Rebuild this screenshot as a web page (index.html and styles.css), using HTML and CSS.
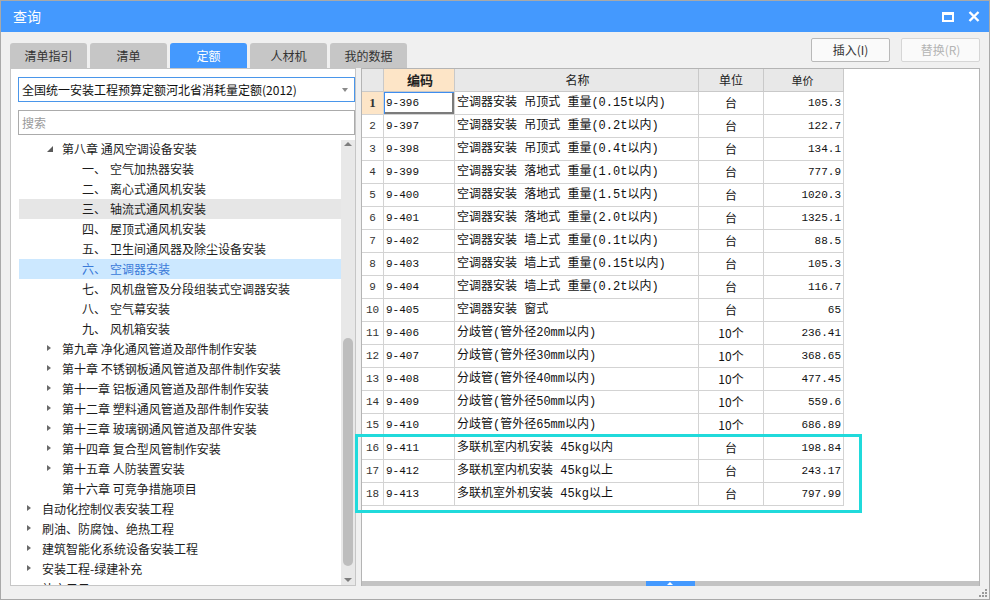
FILE: index.html
```html
<!DOCTYPE html>
<html lang="zh">
<head>
<meta charset="utf-8">
<title>查询</title>
<link rel="stylesheet" href="styles.css">
</head>
<body>
<div class="window">
  <div class="titlebar">
    <span class="title">查询</span>
    <div class="win-ctrls">
      <svg class="ico-max" width="12" height="10" viewBox="0 0 12 10"><rect x="1" y="1" width="10" height="8" fill="none" stroke="#fff" stroke-width="2"/><rect x="1" y="0" width="10" height="3" fill="#fff"/></svg>
      <svg class="ico-close" width="12" height="11" viewBox="0 0 12 11"><path d="M1.5 1 L10.5 10 M10.5 1 L1.5 10" stroke="#fff" stroke-width="2.4" stroke-linecap="butt"/></svg>
    </div>
  </div>

  <div class="toolbar">
    <div class="tabs">
      <div class="tab">清单指引</div>
      <div class="tab">清单</div>
      <div class="tab active">定额</div>
      <div class="tab">人材机</div>
      <div class="tab">我的数据</div>
    </div>
    <div class="actions">
      <button class="btn">插入(I)</button>
      <button class="btn disabled">替换(R)</button>
    </div>
  </div>

  <div class="main">
    <div class="left-panel">
      <div class="forms">
        <div class="select">全国统一安装工程预算定额河北省消耗量定额(2012)<span class="caret"></span></div>
        <div class="search">搜索</div>
      </div>
      <div class="tree-wrap">
        <div class="tree">
          <div class="node l2"><span class="tw exp"></span>第八章 通风空调设备安装</div>
          <div class="node l3"><span class="num">一、</span>空气加热器安装</div>
          <div class="node l3"><span class="num">二、</span>离心式通风机安装</div>
          <div class="node l3 hover"><span class="num">三、</span>轴流式通风机安装</div>
          <div class="node l3"><span class="num">四、</span>屋顶式通风机安装</div>
          <div class="node l3"><span class="num">五、</span>卫生间通风器及除尘设备安装</div>
          <div class="node l3 selected"><span class="num">六、</span>空调器安装</div>
          <div class="node l3"><span class="num">七、</span>风机盘管及分段组装式空调器安装</div>
          <div class="node l3"><span class="num">八、</span>空气幕安装</div>
          <div class="node l3"><span class="num">九、</span>风机箱安装</div>
          <div class="node l2"><span class="tw col"></span>第九章 净化通风管道及部件制作安装</div>
          <div class="node l2"><span class="tw col"></span>第十章 不锈钢板通风管道及部件制作安装</div>
          <div class="node l2"><span class="tw col"></span>第十一章 铝板通风管道及部件制作安装</div>
          <div class="node l2"><span class="tw col"></span>第十二章 塑料通风管道及部件制作安装</div>
          <div class="node l2"><span class="tw col"></span>第十三章 玻璃钢通风管道及部件安装</div>
          <div class="node l2"><span class="tw col"></span>第十四章 复合型风管制作安装</div>
          <div class="node l2"><span class="tw col"></span>第十五章 人防装置安装</div>
          <div class="node l2"><span class="tw"></span>第十六章 可竞争措施项目</div>
          <div class="node l1"><span class="tw col"></span>自动化控制仪表安装工程</div>
          <div class="node l1"><span class="tw col"></span>刷油、防腐蚀、绝热工程</div>
          <div class="node l1"><span class="tw col"></span>建筑智能化系统设备安装工程</div>
          <div class="node l1"><span class="tw col"></span>安装工程-绿建补充</div>
          <div class="node l1"><span class="tw"></span>补充子目</div>
        </div>
        <div class="vscroll">
          <span class="arr up"></span>
          <div class="vtrack"><div class="vthumb"></div></div>
          <span class="arr down"></span>
        </div>
      </div>
    </div>

    <div class="right-panel">
      <div class="grid-area">
        <div class="grid">
          <div class="row head">
            <div class="c rn"></div>
            <div class="c code hl">编码</div>
            <div class="c name">名称</div>
            <div class="c unit">单位</div>
            <div class="c price">单价</div>
          </div>
          <div class="row">
            <div class="c rn hl">1</div>
            <div class="c code focus">9-396</div>
            <div class="c name">空调器安装 吊顶式 重量(0.15t以内)</div>
            <div class="c unit">台</div>
            <div class="c price">105.3</div>
          </div>
          <div class="row"><div class="c rn">2</div><div class="c code">9-397</div><div class="c name">空调器安装 吊顶式 重量(0.2t以内)</div><div class="c unit">台</div><div class="c price">122.7</div></div>
          <div class="row"><div class="c rn">3</div><div class="c code">9-398</div><div class="c name">空调器安装 吊顶式 重量(0.4t以内)</div><div class="c unit">台</div><div class="c price">134.1</div></div>
          <div class="row"><div class="c rn">4</div><div class="c code">9-399</div><div class="c name">空调器安装 落地式 重量(1.0t以内)</div><div class="c unit">台</div><div class="c price">777.9</div></div>
          <div class="row"><div class="c rn">5</div><div class="c code">9-400</div><div class="c name">空调器安装 落地式 重量(1.5t以内)</div><div class="c unit">台</div><div class="c price">1020.3</div></div>
          <div class="row"><div class="c rn">6</div><div class="c code">9-401</div><div class="c name">空调器安装 落地式 重量(2.0t以内)</div><div class="c unit">台</div><div class="c price">1325.1</div></div>
          <div class="row"><div class="c rn">7</div><div class="c code">9-402</div><div class="c name">空调器安装 墙上式 重量(0.1t以内)</div><div class="c unit">台</div><div class="c price">88.5</div></div>
          <div class="row"><div class="c rn">8</div><div class="c code">9-403</div><div class="c name">空调器安装 墙上式 重量(0.15t以内)</div><div class="c unit">台</div><div class="c price">105.3</div></div>
          <div class="row"><div class="c rn">9</div><div class="c code">9-404</div><div class="c name">空调器安装 墙上式 重量(0.2t以内)</div><div class="c unit">台</div><div class="c price">116.7</div></div>
          <div class="row"><div class="c rn">10</div><div class="c code">9-405</div><div class="c name">空调器安装 窗式</div><div class="c unit">台</div><div class="c price">65</div></div>
          <div class="row"><div class="c rn">11</div><div class="c code">9-406</div><div class="c name">分歧管(管外径20mm以内)</div><div class="c unit">10个</div><div class="c price">236.41</div></div>
          <div class="row"><div class="c rn">12</div><div class="c code">9-407</div><div class="c name">分歧管(管外径30mm以内)</div><div class="c unit">10个</div><div class="c price">368.65</div></div>
          <div class="row"><div class="c rn">13</div><div class="c code">9-408</div><div class="c name">分歧管(管外径40mm以内)</div><div class="c unit">10个</div><div class="c price">477.45</div></div>
          <div class="row"><div class="c rn">14</div><div class="c code">9-409</div><div class="c name">分歧管(管外径50mm以内)</div><div class="c unit">10个</div><div class="c price">559.6</div></div>
          <div class="row"><div class="c rn">15</div><div class="c code">9-410</div><div class="c name">分歧管(管外径65mm以内)</div><div class="c unit">10个</div><div class="c price">686.89</div></div>
          <div class="row"><div class="c rn">16</div><div class="c code">9-411</div><div class="c name">多联机室内机安装 45kg以内</div><div class="c unit">台</div><div class="c price">198.84</div></div>
          <div class="row"><div class="c rn">17</div><div class="c code">9-412</div><div class="c name">多联机室内机安装 45kg以上</div><div class="c unit">台</div><div class="c price">243.17</div></div>
          <div class="row"><div class="c rn">18</div><div class="c code">9-413</div><div class="c name">多联机室外机安装 45kg以上</div><div class="c unit">台</div><div class="c price">797.99</div></div>
        </div>
      </div>
      <div class="hbar"><div class="hthumb"><span class="hcaret"></span></div></div>
    </div>
  </div>

  <div class="statusbar">
    <svg class="grip" width="10" height="10" viewBox="0 0 10 10"><g fill="#9a9a9a"><rect x="7" y="1" width="2" height="2"/><rect x="4" y="4" width="2" height="2"/><rect x="7" y="4" width="2" height="2"/><rect x="1" y="7" width="2" height="2"/><rect x="4" y="7" width="2" height="2"/><rect x="7" y="7" width="2" height="2"/></g></svg>
  </div>

  <div class="annot"></div>
</div>
</body>
</html>
```

FILE: styles.css
```css
html, body {
  margin: 0;
  padding: 0;
}
body {
  font-family: "Noto Sans CJK SC", "Noto Sans", sans-serif;
  font-size: 12px;
  color: #222;
  background: #f0f0f0;
}
.window {
  position: relative;
  width: 990px;
  height: 600px;
  box-sizing: border-box;
  border: 1px solid #a9a9a9;
  background: #f0f0f0;
  display: flex;
  flex-direction: column;
  overflow: hidden;
}

/* title bar */
.titlebar {
  height: 31px;
  flex: none;
  background: #4499fe;
  display: flex;
  align-items: center;
  justify-content: space-between;
  padding: 0 9px 0 12px;
}
.title {
  color: #fff;
  font-size: 14px;
  line-height: 31px;
}
.win-ctrls {
  display: flex;
  align-items: center;
  gap: 14px;
}
.ico-max, .ico-close { display: block; }

/* toolbar */
.toolbar {
  height: 36px;
  flex: none;
  display: flex;
  justify-content: space-between;
  padding: 0 9px 0 9px;
}
.tabs {
  display: flex;
  gap: 3px;
  align-self: flex-end;
}
.tab {
  width: 77px;
  height: 25px;
  line-height: 25px;
  text-align: center;
  background: #c6c6c6;
  color: #333;
  border-radius: 3px 3px 0 0;
  font-size: 12px;
}
.tab.active {
  background: #4499fe;
  color: #fff;
}
.actions {
  display: flex;
  gap: 11px;
  padding-top: 6px;
}
.btn {
  width: 79px;
  height: 24px;
  box-sizing: border-box;
  border: 1px solid #b9b9b9;
  border-radius: 2px;
  background: #fafafa;
  color: #333;
  font-family: "Noto Sans CJK SC", sans-serif;
  font-size: 12px;
  line-height: 20px;
  padding: 0;
}
.btn.disabled {
  color: #b4b4b4;
  border-color: #d6d6d6;
}

/* main area */
.main {
  height: 518px;
  flex: none;
  display: flex;
  gap: 5px;
  padding: 0 9px;
}
.left-panel {
  width: 346px;
  box-sizing: border-box;
  border: 1px solid #c6c6c6;
  background: #fff;
  display: flex;
  flex-direction: column;
}
.forms {
  padding: 8px 0 0 7px;
  display: flex;
  flex-direction: column;
  gap: 8px;
}
.select {
  position: relative;
  height: 25px;
  box-sizing: border-box;
  border: 1px solid #4a96ea;
  padding-left: 3px;
  line-height: 23px;
  font-size: 12px;
  color: #111;
}
.caret {
  position: absolute;
  right: 6px;
  top: 10px;
  width: 0;
  height: 0;
  border-left: 3.5px solid transparent;
  border-right: 3.5px solid transparent;
  border-top: 4px solid #8a8a8a;
}
.search {
  height: 25px;
  box-sizing: border-box;
  border: 1px solid #ababab;
  padding-left: 3px;
  line-height: 23px;
  color: #9a9a9a;
}
.tree-wrap {
  margin-top: 4px;
  flex: 1;
  min-height: 0;
  display: flex;
}
.tree {
  flex: 1;
  margin-left: 8px;
  overflow: hidden;
}
.node {
  height: 20px;
  line-height: 20px;
  white-space: nowrap;
  display: flex;
  align-items: center;
  color: #1c1c1c;
}
.node.l1 { padding-left: 8px; }
.node.l2 { padding-left: 28px; }
.node.l3 { padding-left: 63px; }
.node.hover { background: #e6e6e6; }
.node.selected { background: #cce8ff; color: #3a7ad9; }
.tw {
  width: 15px;
  height: 20px;
  flex: none;
  position: relative;
}
.tw.col::before {
  content: "";
  position: absolute;
  left: 0;
  top: 6px;
  border-left: 4px solid #6a6a6a;
  border-top: 3.5px solid transparent;
  border-bottom: 3.5px solid transparent;
}
.tw.exp::before {
  content: "";
  position: absolute;
  left: 0;
  top: 7px;
  border-right: 6px solid #5a5a5a;
  border-top: 6px solid transparent;
}
.num {
  width: 28px;
  flex: none;
}
.vscroll {
  width: 14px;
  flex: none;
  background: #e8e8e8;
  margin-top: 1px;
  display: flex;
  flex-direction: column;
  align-items: center;
}
.arr {
  width: 0;
  height: 0;
  border-left: 4px solid transparent;
  border-right: 4px solid transparent;
  flex: none;
}
.arr.up {
  border-bottom: 4px solid #7d7d7d;
  margin: 2px 0 6px;
}
.arr.down {
  border-top: 4px solid #7d7d7d;
  margin: 6px 0 3px;
}
.vtrack {
  flex: 1;
  width: 10px;
  display: flex;
  flex-direction: column;
  justify-content: flex-end;
}
.vthumb {
  height: 228px;
  background: #bdbdbd;
  border-radius: 5px;
  margin-bottom: 6px;
}

/* right panel */
.right-panel {
  flex: 1;
  box-sizing: border-box;
  border: 1px solid #b4b4b4;
  border-bottom: none;
  background: #fff;
  display: flex;
  flex-direction: column;
}
.grid-area {
  flex: 1;
  min-height: 0;
  overflow: hidden;
}
.grid {
  width: 482px;
  font-family: "Liberation Mono", "Noto Sans CJK SC", monospace;
  font-size: 12px;
}
.row {
  display: grid;
  grid-template-columns: 22px 71px 244px 65px 80px;
  height: 23px;
}
.c {
  box-sizing: border-box;
  border-right: 1px solid #d3d3d3;
  border-bottom: 1px solid #d3d3d3;
  line-height: 22px;
  white-space: nowrap;
  overflow: hidden;
  color: #111;
}
.row.head .c {
  background: #e8e8e8;
  border-color: #c9c9c9;
  text-align: center;
  font-family: "Noto Sans CJK SC", sans-serif;
  color: #222;
}
.row.head .c.hl {
  background: #fde5c7;
  font-weight: bold;
  font-size: 13px;
}
.c.rn {
  text-align: center;
  font-size: 11px;
  color: #333;
}
.c.rn.hl {
  background: #fde5c7;
  font-weight: bold;
  font-family: "Liberation Serif", serif;
  font-size: 13px;
}
.c.code {
  padding-left: 2px;
  font-size: 11px;
}
.c.code.focus {
  box-shadow: inset 1px 1px 0 #3d8df0, inset -2px -2px 0 #7b7b7b;
}
.c.name { padding-left: 2px; }
.c.unit {
  text-align: center;
  font-family: "Noto Sans CJK SC", sans-serif;
}
.c.price {
  text-align: right;
  padding-right: 2px;
  font-size: 11px;
}
.hbar {
  height: 5px;
  flex: none;
  background: #c3c3c3;
  position: relative;
}
.hthumb {
  position: absolute;
  left: 284px;
  top: 0;
  width: 49px;
  height: 5px;
  background: #4499fe;
}
.hcaret {
  position: absolute;
  left: 21px;
  top: 1px;
  border-left: 3px solid transparent;
  border-right: 3px solid transparent;
  border-bottom: 3px solid #fff;
}

/* bottom strip */
.statusbar {
  flex: 1;
  position: relative;
  background: #f0f0f0;
}
.grip {
  position: absolute;
  right: 1px;
  bottom: 1px;
}

/* annotation box */
.annot {
  position: absolute;
  left: 354px;
  top: 433px;
  width: 507px;
  height: 79px;
  box-sizing: border-box;
  border: 3px solid #20dadb;
  pointer-events: none;
}
```
